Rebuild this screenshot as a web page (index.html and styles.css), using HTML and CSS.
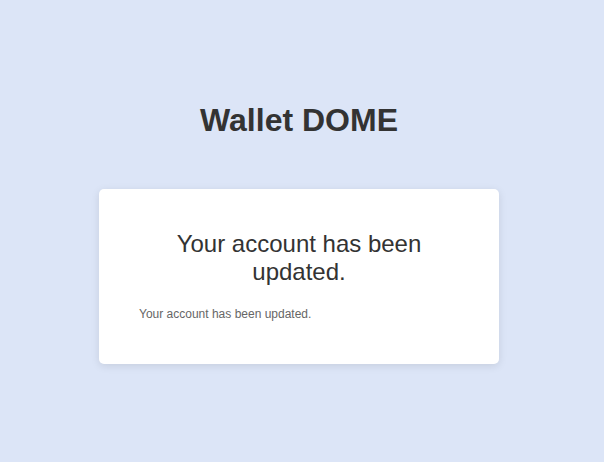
FILE: index.html
```html
<!DOCTYPE html>
<html>
<head>
<meta charset="utf-8">
<link rel="stylesheet" href="styles.css">
</head>
<body>
<main class="page">
  <h1 class="brand">Wallet DOME</h1>
  <section class="card">
    <h2 class="card-title">Your account has been updated.</h2>
    <p class="card-text">Your account has been updated.</p>
  </section>
</main>
</body>
</html>
```
FILE: styles.css
```css
html, body {
  margin: 0;
  padding: 0;
}
body {
  background: #dce5f7;
  font-family: "Liberation Sans", Arial, sans-serif;
  color: #333;
  min-height: 462px;
}
.page {
  display: flex;
  flex-direction: column;
  align-items: center;
  padding-top: 102px;
  padding-right: 6px;
}
.brand {
  margin: 0 0 50px;
  font-size: 32px;
  font-weight: bold;
  color: #333;
}
.card {
  box-sizing: border-box;
  width: 400px;
  background: #fff;
  border-radius: 5px;
  padding: 41px 40px 43px;
  box-shadow: 0 2px 8px rgba(0, 0, 0, 0.1);
}
.card-title {
  margin: 0 0 21px;
  font-size: 24px;
  font-weight: normal;
  text-align: center;
  color: #333;
}
.card-text {
  margin: 0;
  font-size: 12px;
  color: #666;
}
```
